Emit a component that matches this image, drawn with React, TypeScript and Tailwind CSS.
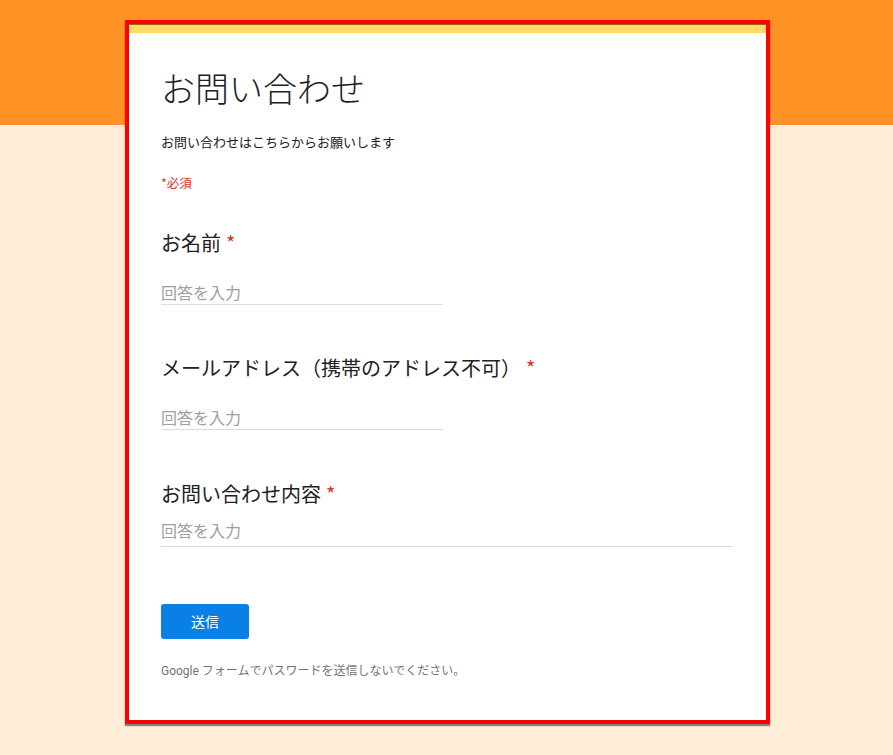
import React from "react";

const jp = { fontFamily: '"Noto Sans CJK JP", "Noto Sans", sans-serif' };
const footerFont = { fontFamily: 'Roboto, "Noto Sans CJK JP", sans-serif' };

function Question({
  label,
  gapTop,
  textarea,
}: {
  label: string;
  gapTop: string;
  textarea?: boolean;
}) {
  return (
    <div className={gapTop}>
      <div className="h-[28px] flex items-center text-[20px] leading-[28px] text-[#202124]">
        <span>{label}</span>
        <span className="ml-[5px] text-[#d93025]">*</span>
      </div>
      {textarea ? (
        <div className="mt-[10px] h-[29px] w-[572px] border-b border-[#dadce0] flex items-start text-[16px] leading-[24px] text-[#9e9e9e]">
          回答を入力
        </div>
      ) : (
        <div className="mt-[24px] h-[24px] w-[282px] border-b border-[#dadce0] flex items-center text-[16px] leading-[23px] text-[#9e9e9e]">
          回答を入力
        </div>
      )}
    </div>
  );
}

export default function App() {
  return (
    <div
      className="w-[893px] h-[755px] overflow-hidden bg-[linear-gradient(to_bottom,#ff9224_0px,#ff9224_125px,#ffedd8_125px,#ffedd8_100%)] pt-[20px]"
      style={jp}
    >
      <div className="ml-[125px] w-[645px] border-4 border-[#ff0000] bg-white shadow-[0_2px_1px_rgba(0,0,0,0.45)]">
        <div className="h-[9px] bg-[#ffd966] border-t border-[#8a6b2a]" />
        <div className="px-[32px] pt-[35px] pb-[41px]">
          <div className="h-[40px] flex items-center text-[34px] leading-[40px] font-light text-[#202124]">
            お問い合わせ
          </div>
          <div className="mt-[24px] h-[20px] flex items-center text-[13px] text-[#202124]">
            お問い合わせはこちらからお願いします
          </div>
          <div className="mt-[21px] h-[20px] flex items-center text-[12.5px] text-[#d93025]">
            *必須
          </div>
          <Question label="お名前" gapTop="mt-[36px]" />
          <Question label="メールアドレス（携帯のアドレス不可）" gapTop="mt-[49px]" />
          <Question label="お問い合わせ内容" gapTop="mt-[50px]" textarea />
          <button className="mt-[57px] w-[88px] h-[35px] rounded-[3px] bg-[#0a7fe6] text-white text-[14px] flex items-center justify-center">
            送信
          </button>
          <div
            className="mt-[24px] h-[16px] flex items-center text-[12px] text-[#70757a]"
            style={footerFont}
          >
            Google フォームでパスワードを送信しないでください。
          </div>
        </div>
      </div>
    </div>
  );
}
